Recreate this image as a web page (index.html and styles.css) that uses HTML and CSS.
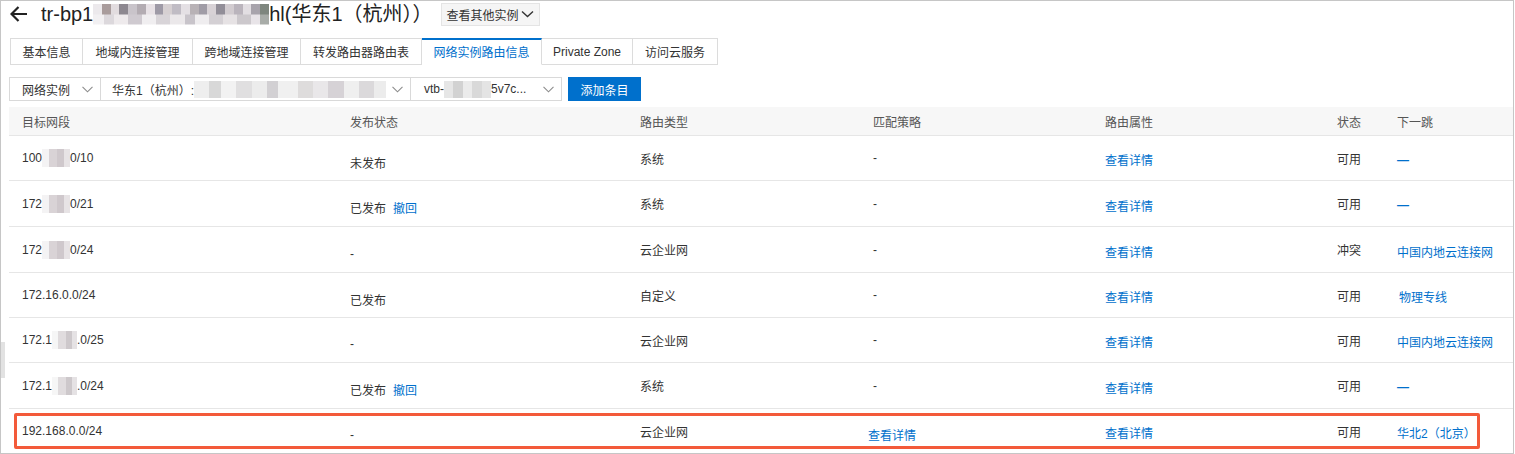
FILE: index.html
```html
<!DOCTYPE html>
<html lang="zh-CN">
<head>
<meta charset="utf-8">
<title>网络实例路由信息</title>
<link rel="stylesheet" href="styles.css">
</head>
<body>
<div class="frame">
  <div class="titlebar">
    <svg class="back" width="18" height="16" viewBox="0 0 18 16"><path d="M1.5 8H17M8.5 1L1.5 8l7 7" fill="none" stroke="#222" stroke-width="2.2"/></svg>
    <h1 class="title">tr-bp1<span class="blur blur-title"></span>hl(华东1（杭州））</h1>
    <button class="switch">查看其他实例<svg width="13" height="8" viewBox="0 0 13 8"><path d="M1 1.5l5.5 5 5.5-5" fill="none" stroke="#333" stroke-width="1.4"/></svg></button>
  </div>

  <div class="tabs">
    <div class="tab t1">基本信息</div>
    <div class="tab t2">地域内连接管理</div>
    <div class="tab t3">跨地域连接管理</div>
    <div class="tab t4">转发路由器路由表</div>
    <div class="tab t5 active">网络实例路由信息</div>
    <div class="tab t6">Private Zone</div>
    <div class="tab t7">访问云服务</div>
  </div>

  <div class="filters">
    <div class="select s1"><span class="val">网络实例</span><svg class="chev" width="11" height="7" viewBox="0 0 11 7"><path d="M.5 .8l5 5 5-5" fill="none" stroke="#8c8c8c" stroke-width="1.1"/></svg></div>
    <div class="select s2"><span class="val">华东1（杭州）:<span class="blur blur-s2"></span></span><svg class="chev" width="11" height="7" viewBox="0 0 11 7"><path d="M.5 .8l5 5 5-5" fill="none" stroke="#8c8c8c" stroke-width="1.1"/></svg></div>
    <div class="select s3"><span class="val">vtb-<span class="blur blur-s3"></span>5v7c...</span><svg class="chev" width="11" height="7" viewBox="0 0 11 7"><path d="M.5 .8l5 5 5-5" fill="none" stroke="#8c8c8c" stroke-width="1.1"/></svg></div>
    <button class="primary">添加条目</button>
  </div>

  <div class="table">
    <div class="row head">
      <div class="cell">目标网段</div>
      <div class="cell">发布状态</div>
      <div class="cell">路由类型</div>
      <div class="cell">匹配策略</div>
      <div class="cell">路由属性</div>
      <div class="cell">状态</div>
      <div class="cell">下一跳</div>
    </div>

    <div class="row">
      <div class="cell">100<span class="blur blur-ip"></span>0/10</div>
      <div class="cell c2">未发布</div>
      <div class="cell">系统</div>
      <div class="cell">-</div>
      <div class="cell lk"><a>查看详情</a></div>
      <div class="cell">可用</div>
      <div class="cell lk"><a class="dash">—</a></div>
    </div>

    <div class="row">
      <div class="cell">172<span class="blur blur-ip"></span>0/21</div>
      <div class="cell c2">已发布<a class="undo">撤回</a></div>
      <div class="cell">系统</div>
      <div class="cell">-</div>
      <div class="cell lk"><a>查看详情</a></div>
      <div class="cell">可用</div>
      <div class="cell lk"><a class="dash">—</a></div>
    </div>

    <div class="row">
      <div class="cell">172<span class="blur blur-ip"></span>0/24</div>
      <div class="cell c2">-</div>
      <div class="cell">云企业网</div>
      <div class="cell">-</div>
      <div class="cell lk"><a>查看详情</a></div>
      <div class="cell">冲突</div>
      <div class="cell lk"><a>中国内地云连接网</a></div>
    </div>

    <div class="row">
      <div class="cell">172.16.0.0/24</div>
      <div class="cell c2">已发布</div>
      <div class="cell">自定义</div>
      <div class="cell">-</div>
      <div class="cell lk"><a>查看详情</a></div>
      <div class="cell">可用</div>
      <div class="cell lk"><a class="shift2">物理专线</a></div>
    </div>

    <div class="row">
      <div class="cell">172.1<span class="blur blur-ip2"></span>.0/25</div>
      <div class="cell c2">-</div>
      <div class="cell">云企业网</div>
      <div class="cell">-</div>
      <div class="cell lk"><a>查看详情</a></div>
      <div class="cell">可用</div>
      <div class="cell lk"><a>中国内地云连接网</a></div>
    </div>

    <div class="row">
      <div class="cell">172.1<span class="blur blur-ip2"></span>.0/24</div>
      <div class="cell c2">已发布<a class="undo">撤回</a></div>
      <div class="cell">系统</div>
      <div class="cell">-</div>
      <div class="cell lk"><a>查看详情</a></div>
      <div class="cell">可用</div>
      <div class="cell lk"><a class="dash">—</a></div>
    </div>

    <div class="row last">
      <div class="cell">192.168.0.0/24</div>
      <div class="cell c2">-</div>
      <div class="cell">云企业网</div>
      <div class="cell lk2"><a>查看详情</a></div>
      <div class="cell lk"><a>查看详情</a></div>
      <div class="cell">可用</div>
      <div class="cell lk"><a>华北2（北京）</a></div>
      <div class="highlight"></div>
    </div>
  </div>

  <div class="collapse"></div>
</div>
</body>
</html>
```

FILE: styles.css
```css
* { box-sizing: border-box; }

html, body {
  margin: 0;
  padding: 0;
  background: #fff;
}

body {
  font-family: "Liberation Sans", "Noto Sans CJK SC", sans-serif;
  font-size: 12px;
  color: #333;
}

.frame {
  position: relative;
  width: 1514px;
  height: 454px;
  border: 1px solid #c6c6c6;
  overflow: hidden;
  background: #fff;
}

/* title */
.titlebar {
  display: flex;
  align-items: center;
  height: 26px;
  padding-left: 9px;
}

.back {
  flex: none;
  display: block;
}

.title {
  margin: 0 0 0 13px;
  font-size: 20px;
  font-weight: normal;
  color: #222;
  line-height: 26px;
  white-space: nowrap;
  display: flex;
  align-items: center;
}

.blur {
  display: inline-block;
  vertical-align: middle;
}

.blur-title {
  width: 176px;
  height: 21px;
  background:
    linear-gradient(90deg, #ece9ec 0 5%, #a99c9c 5% 10%, #e2dcdf 10% 15%, #8d8890 15% 20%, #c9c4ca 20% 25%, #b3acb2 25% 30%, #e8e2e6 30% 35%, #9e9aa6 35% 40%, #d6d0d2 40% 45%, #c0bcc4 45% 50%, #e4e0e4 50% 55%, #b8b2b6 55% 60%, #a09ca6 60% 65%, #d8d2d6 65% 70%, #928e98 70% 75%, #d2ccd0 75% 80%, #bab4bc 80% 85%, #e2dee2 85% 90%, #a8a4ac 90% 95%, #7e867e 95% 100%) top / 100% 50% no-repeat,
    linear-gradient(90deg, #f2f0f2 0 6%, #dcd8dc 6% 12%, #eeeaec 12% 20%, #cfcad0 20% 28%, #f0eef0 28% 36%, #d8d4d8 36% 44%, #ebe8ea 44% 52%, #c8c4ca 52% 58%, #efedef 58% 66%, #d4d0d4 66% 74%, #e6e2e4 74% 82%, #ccc8cc 82% 90%, #e8e4e8 90% 95%, #a8aca8 95% 100%) bottom / 100% 50% no-repeat;
}

.switch {
  margin-left: 8px;
  height: 23px;
  padding: 0 5px;
  display: flex;
  align-items: center;
  gap: 2px;
  font: inherit;
  font-size: 12px;
  color: #333;
  background: #f5f5f5;
  border: 1px solid #e4e4e4;
  border-radius: 0;
}

.switch svg { display: block; }

/* tabs */
.tabs {
  display: flex;
  margin: 11px 0 0 9px;
  height: 27px;
}

.tab {
  height: 27px;
  border: 1px solid #dcdcdc;
  border-left: none;
  display: flex;
  align-items: center;
  justify-content: center;
  color: #333;
  white-space: nowrap;
  background: #fff;
}

.tab.t1 { border-left: 1px solid #dcdcdc; width: 73px; }
.tab.t2 { width: 110px; }
.tab.t3 { width: 108px; }
.tab.t4 { width: 121px; }
.tab.t5 { width: 120px; }
.tab.t6 { width: 91px; }
.tab.t7 { width: 85px; }

.tab.active {
  color: #0070cc;
  border-top: 2px solid #0070cc;
  border-bottom-color: #fff;
  padding-bottom: 1px;
}

/* filters */
.filters {
  display: flex;
  margin: 12px 0 0 8px;
  height: 24px;
}

.select {
  height: 24px;
  border: 1px solid #d9d9d9;
  display: flex;
  align-items: center;
  justify-content: space-between;
  padding: 0 7px 0 12px;
  background: #fff;
  white-space: nowrap;
  overflow: hidden;
}

.select + .select { margin-left: -1px; }

.s1 { width: 92px; }
.s2 { width: 311px; padding-left: 11px; }
.s3 { width: 152px; padding-left: 13px; }

.val {
  display: flex;
  align-items: center;
  color: #333;
}

.chev { display: block; flex: none; }

.blur-s2 {
  width: 192px;
  height: 17px;
  background: linear-gradient(90deg, #eeeeee 0 8%, #d8d8d8 8% 14%, #f2f2f2 14% 22%, #e0dfe0 22% 30%, #ececec 30% 38%, #d2d0d3 38% 44%, #f0f0f0 44% 54%, #dedcdc 54% 62%, #e9e7e9 62% 70%, #d6d2d6 70% 78%, #efefef 78% 86%, #dbd9db 86% 94%, #ececec 94% 100%);
}

.blur-s3 {
  width: 47px;
  height: 17px;
  background: linear-gradient(90deg, #e6e6e6 0 20%, #d2d2d2 20% 40%, #ebebeb 40% 60%, #d9d9d9 60% 80%, #e4e4e4 80% 100%);
}

.primary {
  margin-left: 6px;
  width: 73px;
  height: 24px;
  border: none;
  background: #0070cc;
  color: #fff;
  font: inherit;
  font-size: 12px;
  padding: 0;
}

/* table */
.table {
  margin: 6px 0 0 8px;
  width: 1504px;
}

.row {
  display: grid;
  grid-template-columns: 328px 290px 233px 232px 232px 60px 129px;
  height: 45px;
  border-bottom: 1px solid #e6e6e6;
  position: relative;
}

.row:nth-child(3),
.row:nth-child(4),
.row:nth-child(7) { height: 46px; }

.row.head {
  height: 29px;
  background: #f7f7f7;
  color: #555;
}

.cell {
  display: flex;
  align-items: center;
  white-space: nowrap;
  min-width: 0;
  padding-left: 13px;
}

.c2 { padding-top: 8px; }

.lk { padding-top: 3px; }
.lk2 { padding-top: 7px; padding-left: 8px; }

a {
  color: #0070cc;
  text-decoration: none;
}

.dash {
  color: #0070cc;
  font-weight: bold;
}

.undo { margin-left: 7px; }
.shift2 { margin-left: 2px; }

.blur-ip {
  width: 28px;
  height: 18px;
  background: linear-gradient(90deg, #f4f3f4 0 25%, #d9d3d6 25% 55%, #cfc8cc 55% 80%, #e7e3e5 80% 100%);
}

.blur-ip2 {
  width: 25px;
  height: 18px;
  background: linear-gradient(90deg, #f6f6f6 0 25%, #e0dcde 25% 55%, #cdc8cb 55% 80%, #e5e2e4 80% 100%);
}

.highlight {
  position: absolute;
  left: 5px;
  top: 4px;
  width: 1466px;
  height: 36px;
  border: 3px solid #f35a3a;
  border-radius: 2px;
  pointer-events: none;
}

.collapse {
  position: absolute;
  left: 0;
  top: 341px;
  width: 4px;
  height: 36px;
  background: #e2e2e2;
}
```
